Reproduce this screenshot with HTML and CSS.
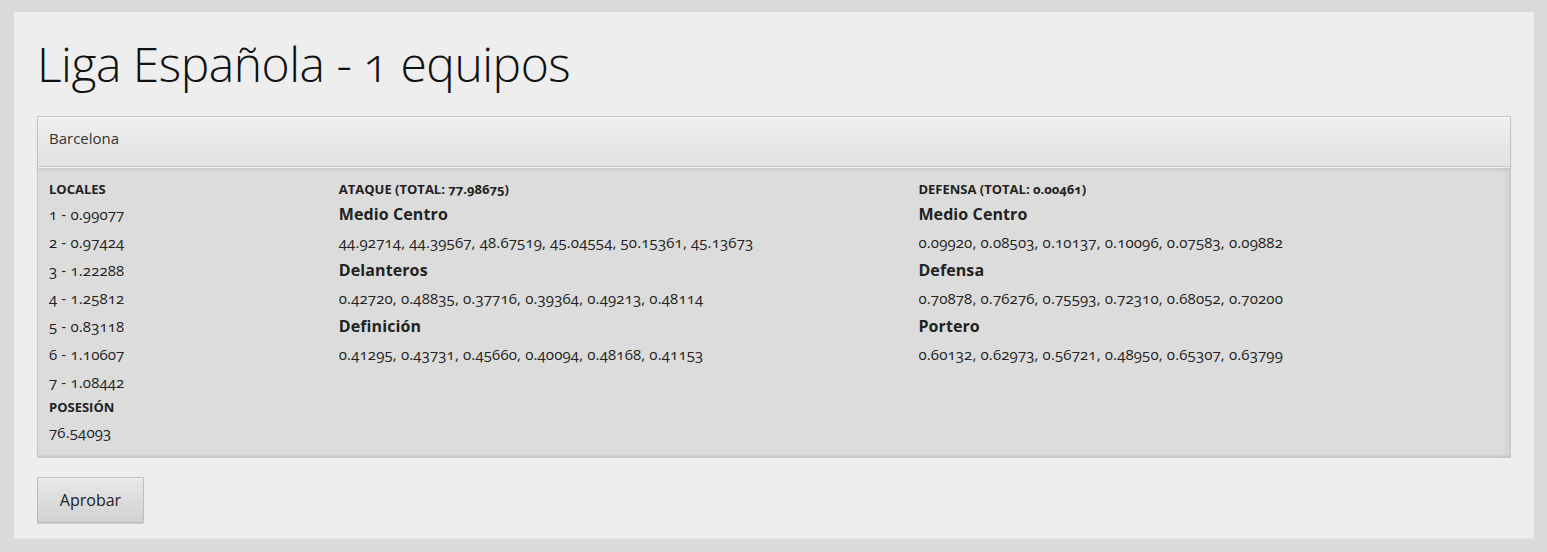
FILE: index.html
```html
<!DOCTYPE html>
<html lang="es">
<head>
<meta charset="utf-8">
<title>Liga Española</title>
<link rel="stylesheet" href="styles.css">
</head>
<body>
<div class="page">
  <h1 class="title">Liga Española - 1 equipos</h1>
  <div class="panel">
    <div class="panel-heading">Barcelona</div>
    <div class="panel-body">
      <div class="col">
        <h5 class="label">Locales</h5>
        <div class="line">1 - 0.99077</div>
        <div class="line">2 - 0.97424</div>
        <div class="line">3 - 1.22288</div>
        <div class="line">4 - 1.25812</div>
        <div class="line">5 - 0.83118</div>
        <div class="line">6 - 1.10607</div>
        <div class="line">7 - 1.08442</div>
        <h5 class="label">Posesión</h5>
        <div class="line">76.54093</div>
      </div>
      <div class="col">
        <h5 class="label">Ataque (total: 77.98675)</h5>
        <div class="line sub">Medio Centro</div>
        <div class="line">44.92714, 44.39567, 48.67519, 45.04554, 50.15361, 45.13673</div>
        <div class="line sub">Delanteros</div>
        <div class="line">0.42720, 0.48835, 0.37716, 0.39364, 0.49213, 0.48114</div>
        <div class="line sub">Definición</div>
        <div class="line">0.41295, 0.43731, 0.45660, 0.40094, 0.48168, 0.41153</div>
      </div>
      <div class="col">
        <h5 class="label">Defensa (total: 0.00461)</h5>
        <div class="line sub">Medio Centro</div>
        <div class="line">0.09920, 0.08503, 0.10137, 0.10096, 0.07583, 0.09882</div>
        <div class="line sub">Defensa</div>
        <div class="line">0.70878, 0.76276, 0.75593, 0.72310, 0.68052, 0.70200</div>
        <div class="line sub">Portero</div>
        <div class="line">0.60132, 0.62973, 0.56721, 0.48950, 0.65307, 0.63799</div>
      </div>
    </div>
  </div>
  <button class="btn" type="button">Aprobar</button>
</div>
</body>
</html>
```
FILE: styles.css
```css
html, body {
  margin: 0;
  padding: 0;
}
body {
  background: #d9dadc;
  font-family: "Open Sans", "Noto Sans", sans-serif;
  font-variant-numeric: oldstyle-nums;
  color: #222;
  padding: 12px 13px 13px 14px;
}
.page {
  background: #eeeeee;
  padding: 24px 23px 15px 23px;
  box-shadow: 0 1px 0 #e4e4e4;
}
.title {
  margin: 0 0 24px 0;
  font-family: "Open Sans", sans-serif;
  font-weight: 300;
  font-size: 48px;
  line-height: 56px;
  color: #111;
  letter-spacing: -0.5px;
}
.panel {
  border: 1px solid #c6c6c6;
  background: #dcdcdc;
}
.panel-heading {
  height: 48px;
  line-height: 41px;
  padding: 0 11px;
  font-size: 15px;
  color: #333;
  background: linear-gradient(#efefef, #e2e2e2);
  border-top: 1px solid #fafafa;
  border-bottom: 1px solid #c9c9c9;
  box-shadow: 0 1px 0 #f2f2f2, 0 3px 4px rgba(0,0,0,0.08);
  position: relative;
}
.panel-body {
  display: grid;
  grid-template-columns: 1fr 2fr 2fr;
  padding: 11px 12px 11px 11px;
  box-shadow: inset -6px 0 8px -4px rgba(0,0,0,0.08), inset 0 -2px 2px rgba(0,0,0,0.06);
}
.label {
  margin: 0;
  font-size: 13px;
  line-height: 22px;
  font-weight: 700;
  text-transform: uppercase;
  color: #222;
}
.line {
  font-size: 15px;
  line-height: 28px;
  letter-spacing: 0.15px;
  white-space: nowrap;
}
.line.sub {
  font-size: 16px;
  font-weight: 700;
  letter-spacing: 0.1px;
}
.btn {
  margin-top: 19px;
  width: 107px;
  height: 46px;
  font-family: "Open Sans", sans-serif;
  font-size: 16px;
  color: #222;
  background: linear-gradient(#e8e8e8, #d2d2d2);
  border: 1px solid #bdbdbd;
  border-radius: 1px;
  box-shadow: inset 0 1px 0 #f6f6f6, 0 1px 1px rgba(0,0,0,0.15);
  cursor: pointer;
}
```
